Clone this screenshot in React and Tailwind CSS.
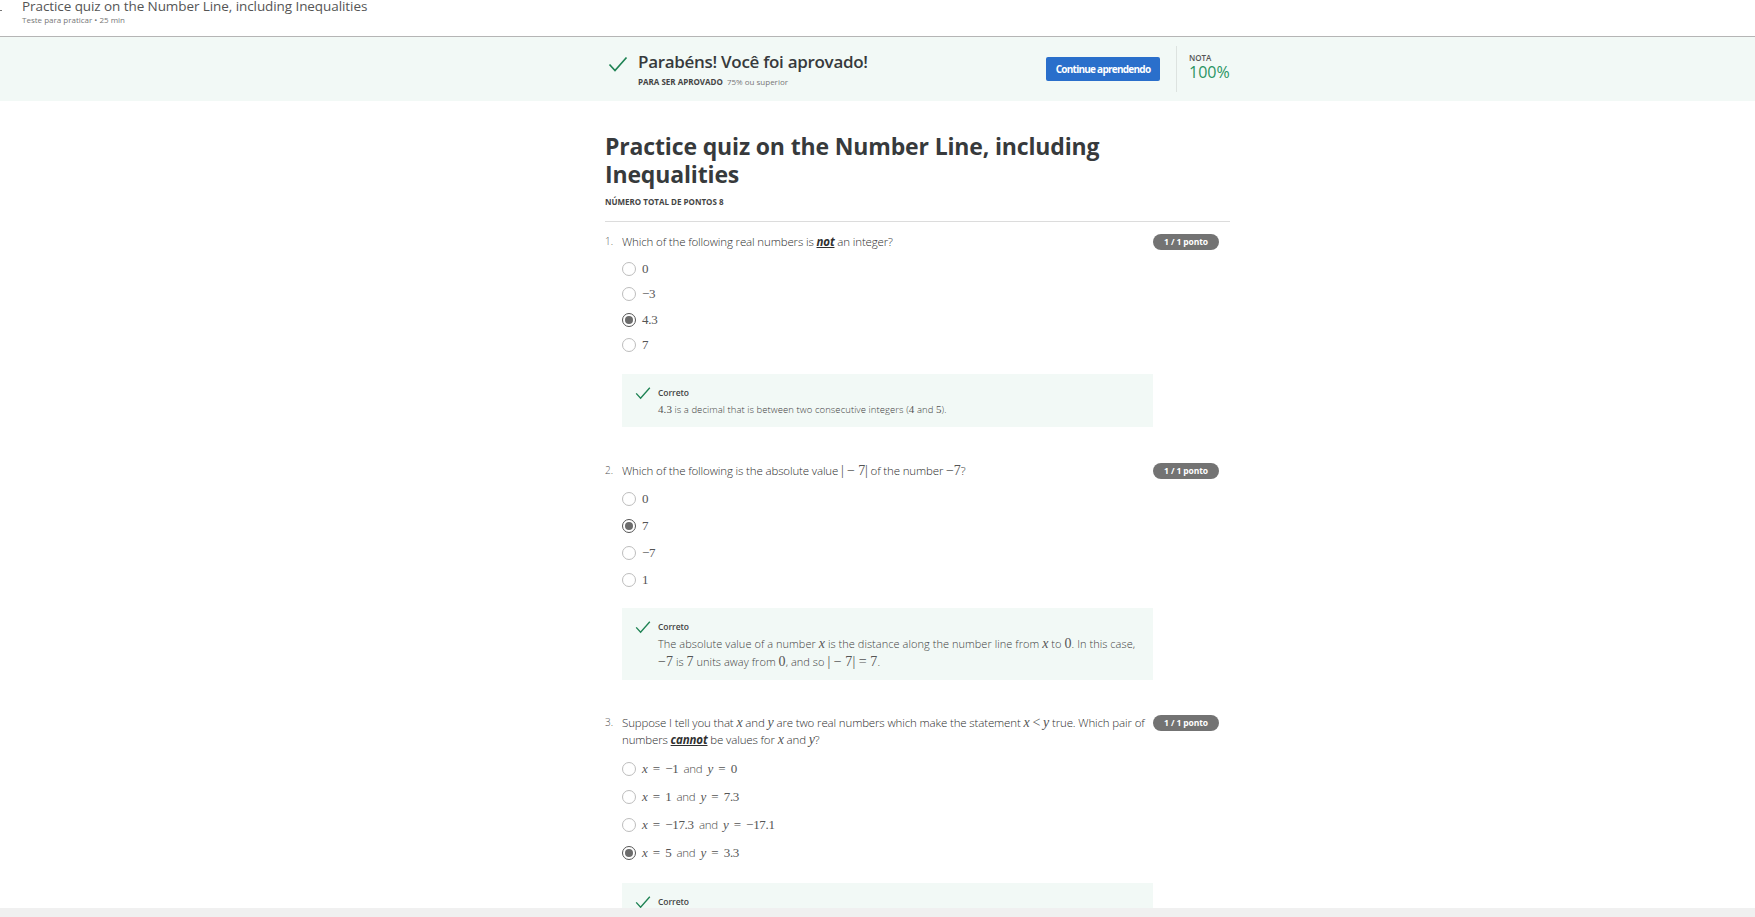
const sans = "font-['Open_Sans',sans-serif]";

function M({ children, i, small, mid }) {
  return <span className={`font-['Liberation_Serif',serif] text-[#555] ${small ? "text-[11px]" : mid ? "text-[13px]" : "text-[14px]"} ${i ? "italic" : ""}`}>{children}</span>;
}

function Check({ size = 20 }) {
  return (
    <svg width={size} height={size} viewBox="0 0 20 20" fill="none" className="shrink-0">
      <path d="M1.5 10.5 L7 16.5 L18.5 3.5" stroke="#1f8354" strokeWidth="1.7" />
    </svg>
  );
}

function Radio({ on, children, h }) {
  return (
    <div className={`flex items-center ${h}`}>
      <span className={`w-[14px] h-[14px] rounded-full border flex items-center justify-center shrink-0 ${on ? "border-[#555] border-[1.5px]" : "border-[#bdbdbd]"}`}>
        {on && <span className="w-[8px] h-[8px] rounded-full bg-[#6b6b6b]" />}
      </span>
      <span className="ml-[6px] text-[11.5px] font-light text-[#4a4a4a] tracking-[-0.3px] [word-spacing:2.5px]">{children}</span>
    </div>
  );
}

function Question({ n, children, className }) {
  return (
    <div className={`flex items-start ${className}`}>
      <span className="w-[17px] text-[10px] leading-[17px] font-light text-[#555] shrink-0">{n}.</span>
      <p className="w-[531px] text-[11.5px] leading-[17px] font-light text-[#2f2f2f] tracking-[-0.14px]">{children}</p>
      <span className="w-[66px] h-[16px] mt-[1px] rounded-full bg-[#737373] text-white text-[8.5px] font-bold tracking-[-0.1px] flex items-center justify-center shrink-0">1 / 1 ponto</span>
    </div>
  );
}

function Feedback({ className, children, textClass }) {
  return (
    <div className={`ml-[17px] w-[531px] bg-[#f2f9f6] flex pl-[13px] ${className}`}>
      <div className="mt-[11px]"><Check size={16} /></div>
      <div className="ml-[7px]">
        <div className="text-[8.5px] font-semibold leading-[12px] text-[#444] mt-[13px] tracking-[-0.05px]">Correto</div>
        <div className={`mt-[2px] leading-[17.5px] text-[#3f3f3f] font-light ${textClass}`}>{children}</div>
      </div>
    </div>
  );
}

export default function App() {
  return (
    <div className={`relative h-[917px] overflow-hidden bg-white ${sans}`}>
      <header className="h-[37px] border-b border-[#b5b5b5] pl-[22px] relative">
        <div className="text-[13.5px] leading-[13px] text-[#555] tracking-[-0.08px]">Practice quiz on the Number Line, including Inequalities</div>
        <div className="mt-[1px] text-[8px] leading-[12px] text-[#777]">Teste para praticar • 25 min</div>
        <span className="absolute left-0 top-[10px] w-[2px] h-[1px] bg-[#777]" />
      </header>

      <section className="h-[64px] bg-[#f2f9f6] pl-[606px]">
        <div className="w-[624px] h-full flex items-center">
          <div className="self-start mt-[17px] ml-[2px]"><Check size={20} /></div>
          <div className="ml-[10px] self-start mt-[13px]">
            <div className="text-[17px] leading-[24px] font-semibold text-[#373a3c] tracking-[-0.3px]">Parabéns! Você foi aprovado!</div>
            <div className="mt-[2px] flex items-center text-[8px] leading-[12px]">
              <span className="font-bold text-[#444]">PARA SER APROVADO</span>
              <span className="ml-[4px] text-[#777]">75% ou superior</span>
            </div>
          </div>
          <div className="ml-auto flex items-center">
            <span className="w-[114px] h-[24px] bg-[#2a6fcb] rounded-[2px] text-white text-[10px] font-bold tracking-[-0.75px] flex items-center justify-center">Continue aprendendo</span>
            <div className="ml-[16px] w-px h-[46px] bg-[#dde3e0]" />
            <div className="ml-[12px] w-[41px] -mt-[4px]">
              <div className="text-[8px] leading-[10px] font-semibold text-[#555]">NOTA</div>
              <div className="text-[16px] leading-[18px] text-[#2a9463]">100%</div>
            </div>
          </div>
        </div>
      </section>

      <main className="w-[625px] ml-[605px]">
        <h1 className="mt-[31px] text-[23px] leading-[28px] font-bold text-[#373a3c] tracking-[-0.15px]">Practice quiz on the Number Line, including Inequalities</h1>
        <div className="mt-[8px] text-[8px] leading-[12px] font-bold text-[#444]">NÚMERO TOTAL DE PONTOS 8</div>
        <div className="mt-[13px] h-px bg-[#dcdcdc]" />

        <Question n={1} className="mt-[11px]">Which of the following real numbers is <b className="italic underline font-bold">not</b> an integer?</Question>
        <div className="ml-[17px] mt-[6px]">
          <Radio h="h-[25px]"><M mid>0</M></Radio>
          <Radio h="h-[26px]"><M mid>−3</M></Radio>
          <Radio h="h-[25px]" on><M mid>4.3</M></Radio>
          <Radio h="h-[26px]"><M mid>7</M></Radio>
        </div>
        <Feedback className="mt-[16px] h-[53px]" textClass="text-[9.5px] tracking-[0.07px]"><M small>4.3</M> is a decimal that is between two consecutive integers (<M small>4</M> and <M small>5</M>).</Feedback>

        <Question n={2} className="mt-[35px]">Which of the following is the absolute value <M>| − 7|</M> of the number <M>−7</M>?</Question>
        <div className="ml-[17px] mt-[6px]">
          <Radio h="h-[27px]"><M mid>0</M></Radio>
          <Radio h="h-[27px]" on><M mid>7</M></Radio>
          <Radio h="h-[27px]"><M mid>−7</M></Radio>
          <Radio h="h-[28px]"><M mid>1</M></Radio>
        </div>
        <Feedback className="mt-[14px] h-[72px]" textClass="text-[11px] tracking-[0.05px]">The absolute value of a number <M i>x</M> is the distance along the number line from <M i>x</M> to <M>0</M>. In this case,<br /><M>−7</M> is <M>7</M> units away from <M>0</M>, and so <M>| − 7| = 7</M>.</Feedback>

        <Question n={3} className="mt-[34px]">Suppose I tell you that <M i>x</M> and <M i>y</M> are two real numbers which make the statement <M i>x</M> <M>&lt;</M> <M i>y</M> true. Which pair of numbers <b className="italic underline font-bold">cannot</b> be values for <M i>x</M> and <M i>y</M>?</Question>
        <div className="ml-[17px] mt-[7px]">
          <Radio h="h-[28px]"><M mid i>x</M> <M mid>= −1</M> and <M mid i>y</M> <M mid>= 0</M></Radio>
          <Radio h="h-[28px]"><M mid i>x</M> <M mid>= 1</M> and <M mid i>y</M> <M mid>= 7.3</M></Radio>
          <Radio h="h-[28px]"><M mid i>x</M> <M mid>= −17.3</M> and <M mid i>y</M> <M mid>= −17.1</M></Radio>
          <Radio h="h-[28px]" on><M mid i>x</M> <M mid>= 5</M> and <M mid i>y</M> <M mid>= 3.3</M></Radio>
        </div>
        <Feedback className="mt-[16px] h-[72px]" textClass="text-[11px]">&nbsp;</Feedback>
      </main>

      <div className="absolute left-0 right-0 bottom-0 h-[9px] bg-[#f0f0f0]" />
    </div>
  );
}
